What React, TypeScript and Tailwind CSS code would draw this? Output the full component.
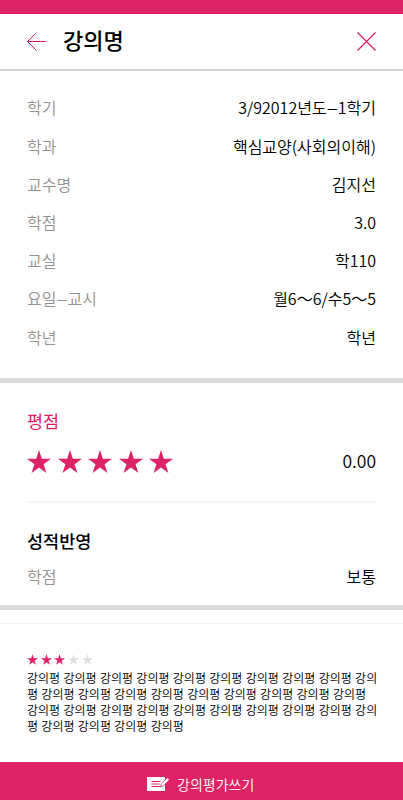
const Dash = () => <span className="mx-[1.3px] inline-block scale-x-130">–</span>;

const details = [
  { label: "학기", value: <>3/92012년도<Dash />1학기</> },
  { label: "학과", value: "핵심교양(사회의이해)" },
  { label: "교수명", value: "김지선" },
  { label: "학점", value: "3.0" },
  { label: "교실", value: "학110" },
  { label: <>요일<Dash />교시</>, value: "월6～6/수5～5" },
  { label: "학년", value: "학년" },
];

const reviewLines = [
  "강의평 강의평 강의평 강의평 강의평 강의평 강의평 강의평 강의평 강의",
  "평 강의평 강의평 강의평 강의평 강의평 강의평 강의평 강의평 강의평",
  "강의평 강의평 강의평 강의평 강의평 강의평 강의평 강의평 강의평 강의",
  "평 강의평 강의평 강의평 강의평",
];

const Star = ({ className }: { className: string }) => (
  <svg viewBox="0 0 24 23" className={className} fill="currentColor">
    <path d="M12 0l2.83 8.77H24l-7.42 5.45L19.42 23 12 17.57 4.58 23l2.84-8.78L0 8.77h9.17z" />
  </svg>
);

const Header = () => (
  <header className="flex h-[57px] shrink-0 items-center justify-between border-b-2 border-[#d2d2d2] px-[27px]">
    <div className="flex items-center">
      <svg viewBox="0 0 19 19" className="h-[19px] w-[19px]" fill="none" stroke="#dc1c62">
        <path d="M9.5.5l-9 9 9 9M.5 9.5H19" />
      </svg>
      <h1 className="ml-[17px] pb-[5px] text-[22px] leading-8 font-medium">강의명</h1>
    </div>
    <svg viewBox="0 0 19 19" className="h-[19px] w-[19px]" fill="none" stroke="#dc1c62" strokeWidth="1.2">
      <path d="M.5.5l18 18M18.5.5l-18 18" />
    </svg>
  </header>
);

const App = () => {
  return (
    <div className="flex h-[800px] w-full flex-col bg-white font-['Noto_Sans_CJK_KR',sans-serif] text-black">
      <div className="h-[14px] shrink-0 border-b border-[#d4145a] bg-[#dd2265]" />
      <Header />

      <dl className="h-[307px] shrink-0 px-[27px] pt-[17.3px] text-base font-[350]">
        {details.map((item, i) => (
          <div key={i} className="flex h-[38.2px] items-center justify-between">
            <dt className="text-[#929292]">{item.label}</dt>
            <dd>{item.value}</dd>
          </div>
        ))}
      </dl>

      <section className="h-[227px] shrink-0 border-t-[5px] border-[#dadada] px-[27px]">
        <h2 className="pt-[24px] text-[17.5px] leading-7 text-[#dc1c62]">평점</h2>
        <div className="flex h-[52px] items-center justify-between">
          <div className="flex gap-[6.6px] text-[#dd2265]">
            {[1, 2, 3, 4, 5].map((n) => (
              <Star key={n} className="h-[23px] w-6" />
            ))}
          </div>
          <span className="text-[17.5px] font-[350]">0.00</span>
        </div>
        <div className="mt-[14px] border-t-2 border-[#f5f5f5]" />
        <h2 className="pt-[24px] text-[17.5px] leading-7 font-medium">성적반영</h2>
        <div className="flex h-[42px] items-center justify-between text-base font-[350]">
          <span className="text-[#929292]">학점</span>
          <span>보통</span>
        </div>
      </section>

      <div className="h-[18px] shrink-0 border-t-[5px] border-[#dadada]" />
      <section className="grow border-t border-[#f0f0f0] px-[27px] pt-[30px]">
        <div className="flex gap-[2.7px]">
          {[1, 2, 3, 4, 5].map((n) => (
            <Star key={n} className={n <= 3 ? "h-[11px] w-[11px] text-[#dd2265]" : "h-[11px] w-[11px] text-[#dedede]"} />
          ))}
        </div>
        <div className="mt-[6px] font-['Liberation_Sans','Noto_Sans_CJK_KR',sans-serif] text-xs leading-4 font-[350] whitespace-nowrap">
          {reviewLines.map((line, i) => (
            <p key={i}>{line}</p>
          ))}
        </div>
      </section>

      <footer className="flex h-[38px] shrink-0 items-center bg-[#dd2265] pt-[6px] pl-[147px] text-white">
        <svg viewBox="0 0 23 16" className="h-4 w-[23px]">
          <path d="M0 1h18v14H0z" fill="#fff" />
          <path d="M4.500 5.500h9M4.500 8h8M4.500 10.500h8.500" stroke="#dd2265" />
          <path d="M13.500 11l1-3.300 6-6 2 2-6 6z" fill="#fff" stroke="#dd2265" strokeWidth=".8" />
        </svg>
        <span className="ml-[7px] pb-px text-sm font-[350]">강의평가쓰기</span>
      </footer>
    </div>
  );
};

export default App;
